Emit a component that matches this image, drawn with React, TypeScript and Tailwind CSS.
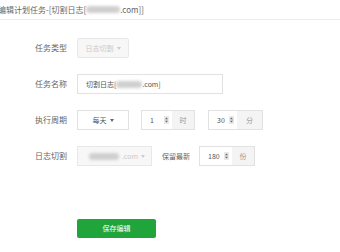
import React from "react";

function Spin() {
  return (
    <svg width="5" height="8" viewBox="0 0 5 8" className="shrink-0">
      <rect x="0" y="0" width="5" height="8" fill="#e8e8e8" />
      <path d="M1 3.2 L2.5 1.5 L4 3.2 Z" fill="#666" />
      <path d="M1 4.8 L2.5 6.5 L4 4.8 Z" fill="#666" />
    </svg>
  );
}

function Caret({ color = "#888" }: { color?: string }) {
  return (
    <svg width="4" height="3" viewBox="0 0 4 3" className="shrink-0">
      <path d="M0 0 L4 0 L2 3 Z" fill={color} />
    </svg>
  );
}

function Blur({ w }: { w: number }) {
  return (
    <span
      className="inline-block h-[7px] bg-[#cfcfcf] blur-[1.5px] rounded-sm align-middle"
      style={{ width: w }}
    />
  );
}

function Label({ children }: { children: React.ReactNode }) {
  return <div className="w-[42px] shrink-0 text-[8px] text-[#666]">{children}</div>;
}

function NumGroup({ value, unit, iw, aw }: { value: string; unit: string; iw: number; aw: number }) {
  return (
    <div className="flex h-[20px] border border-[#e2e2e2]">
      <div className="flex items-center justify-between pl-[8px] pr-[3px] text-[7px] text-[#555] bg-white" style={{ width: iw }}>
        <span>{value}</span>
        <Spin />
      </div>
      <div className="flex items-center justify-center bg-[#f4f4f4] text-[7px] text-[#999]" style={{ width: aw }}>
        {unit}
      </div>
    </div>
  );
}

export default function App() {
  return (
    <div className="w-[340px] h-[252px] bg-white overflow-hidden font-['Noto_Sans_CJK_SC','Noto_Sans',sans-serif] text-[#555]">
      <div className="h-[20px] border-b border-[#ececec] -ml-[2px] whitespace-nowrap text-[8px] leading-[19px] text-[#666] flex items-center">
        <span>编辑计划任务-[切割日志[</span>
        <Blur w={34} />
        <span>.com]]</span>
      </div>
      <div className="pl-[35px] pt-[18px] flex flex-col gap-[16px]">
        <div className="flex items-center h-[20px]">
          <Label>任务类型</Label>
          <div className="w-[52px] h-[20px] border border-[#e8e8e8] bg-[#f7f7f7] rounded-[2px] flex items-center justify-center gap-[3px] text-[7px] text-[#c8c8c8]">
            <span>日志切割</span>
            <Caret color="#ccc" />
          </div>
        </div>
        <div className="flex items-center h-[20px]">
          <Label>任务名称</Label>
          <div className="w-[146px] h-[20px] border border-[#e2e2e2] flex items-center pl-[8px] text-[7px] text-[#555] whitespace-nowrap">
            <span>切割日志[</span>
            <Blur w={26} />
            <span>.com]</span>
          </div>
        </div>
        <div className="flex items-center h-[20px]">
          <Label>执行周期</Label>
          <div className="w-[52px] h-[20px] border border-[#e2e2e2] flex items-center justify-center gap-[3px] text-[7px] text-[#555]">
            <span>每天</span>
            <Caret color="#666" />
          </div>
          <div className="ml-[12px]">
            <NumGroup value="1" unit="时" iw={30} aw={22} />
          </div>
          <div className="ml-[13px]">
            <NumGroup value="30" unit="分" iw={28} aw={25} />
          </div>
        </div>
        <div className="flex items-center h-[20px]">
          <Label>日志切割</Label>
          <div className="w-[75px] h-[20px] border border-[#e8e8e8] bg-[#f7f7f7] flex items-center justify-end pr-[6px] gap-[3px] text-[7px] text-[#c8c8c8]">
            <Blur w={30} />
            <span>.com</span>
            <Caret color="#ccc" />
          </div>
          <div className="ml-[10px] text-[7px] text-[#666] w-[37px]">保留最新</div>
          <NumGroup value="180" unit="份" iw={32} aw={22} />
        </div>
      </div>
      <div className="pl-[77px] mt-[53px]">
        <div className="w-[79px] h-[19px] bg-[#20a53a] rounded-[2px] flex items-center justify-center text-white text-[7px]">
          保存编辑
        </div>
      </div>
    </div>
  );
}
